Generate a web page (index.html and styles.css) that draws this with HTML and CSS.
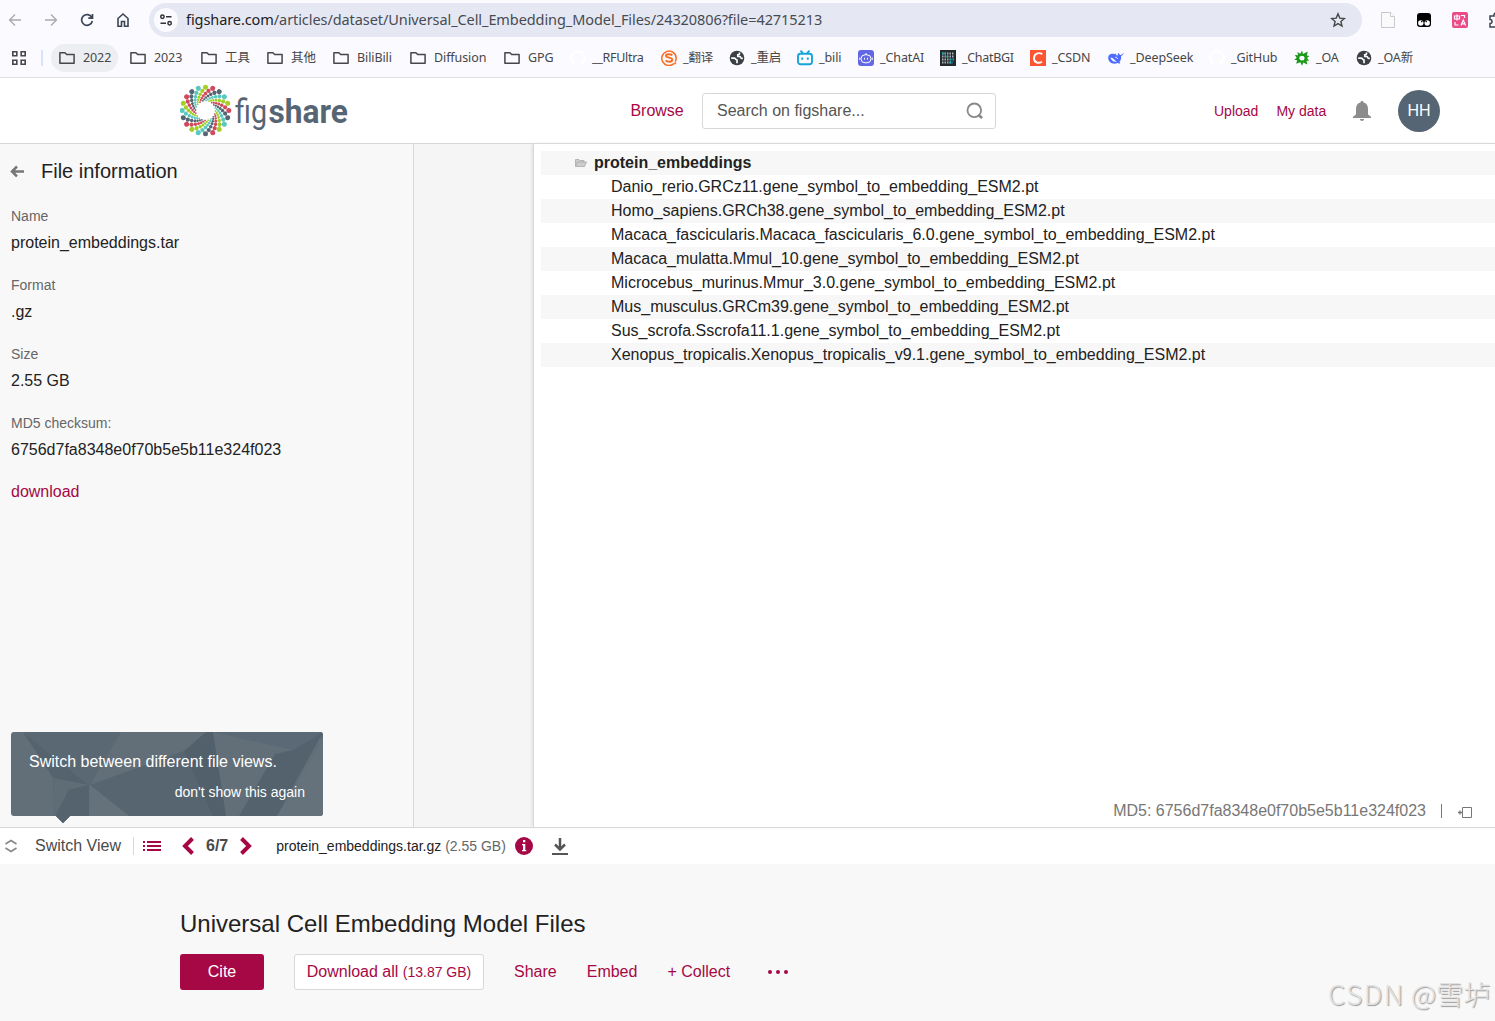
FILE: index.html
```html
<!DOCTYPE html>
<html lang="en">
<head>
<meta charset="utf-8">
<title>Universal Cell Embedding Model Files</title>
<link rel="stylesheet" href="styles.css">
</head>
<body>
<svg class="defs" width="0" height="0">
  <defs>
    <symbol id="folder" viewBox="0 0 16 16"><path d="M.9 2.7h5l1.8 1.9h7.4v8.7H.9z" fill="none" stroke="#474747" stroke-width="1.5" stroke-linejoin="round"/></symbol>
    <symbol id="globe" viewBox="0 0 16 16"><circle cx="8" cy="8" r="7.3" fill="#3c4043"/><path d="M2.200 8.200h3c1.500 0 1.300 1.800 2.800 1.800v3.200" fill="none" stroke="#fafaff" stroke-width="1.700"/><path d="M10.500 2.500v1.300c0 .8-.7 1-1.700 1v1.700h2c.9 0 .8 1.900 2 1.900h1" fill="none" stroke="#fafaff" stroke-width="1.700"/></symbol>
    <symbol id="github" viewBox="0 0 16 16"><path fill="#fff" d="M8 0a8 8 0 0 0-2.500 15.600v-2.200c-2.500.2-2.400-1.800-3.400-2 1.500-.8 1.800 1.400 3.400.6.100-.6.300-.9.600-1.100-3.900-.4-4.600-4.200-2.800-6.200-.3-.8 0-1.700.1-2.100.8-.1 1.600.4 2.200.8 1.300-.400 3.500-.4 4.800 0 .6-.4 1.400-.9 2.200-.8.1.4.400 1.300.1 2.100 1.800 2 1.100 5.800-2.800 6.200.4.300.6.900.6 1.700v3A8 8 0 0 0 8 0z"/></symbol>
    <g id="arm">
      <circle cx="0" cy="-23.300" r="2.500"/><circle cx="-3.200" cy="-19.600" r="2.100"/><circle cx="-5.200" cy="-16.200" r="1.750"/><circle cx="-6.500" cy="-13.300" r="1.450"/><circle cx="-7.300" cy="-10.700" r="1.250"/><circle cx="-7.700" cy="-8.400" r="1.100"/><circle cx="-7.800" cy="-6.300" r=".9"/>
    </g>
    <g id="arms">
      <use href="#arm" fill="#a3cf27"/><use href="#arm" fill="#cf4a5b" transform="rotate(18)"/><use href="#arm" fill="#566573" transform="rotate(36)"/><use href="#arm" fill="#5bc8bf" transform="rotate(54)"/>
    </g>
  </defs>
</svg>

<div class="browser">
  <div class="nav">
    <svg class="nav-icon" viewBox="0 0 16 16"><path d="M14 8H3M8 2.500 2.600 8 8 13.500" fill="none" stroke="#a9aaae" stroke-width="1.400"/></svg>
    <svg class="nav-icon" viewBox="0 0 16 16"><path d="M2 8h11M8 2.500 13.400 8 8 13.500" fill="none" stroke="#a9aaae" stroke-width="1.400"/></svg>
    <svg class="nav-icon" viewBox="0 0 16 16"><path d="M12.800 5.500A5.400 5.400 0 1 0 13.300 9M13.500 2v4.200H9.300" fill="none" stroke="#3c4554" stroke-width="1.700"/></svg>
    <svg class="nav-icon" viewBox="0 0 16 16"><path d="M3 6.500v7.800h3.500V9.500h3v4.800H13V6.500L8 2z" fill="none" stroke="#3c4554" stroke-width="1.600"/></svg>
    <div class="address">
      <span class="site-info"><svg width="14" height="14" viewBox="0 0 14 14" fill="none" stroke="#333" stroke-width="1.500"><circle cx="3.400" cy="3.800" r="1.700"/><path d="M7 3.800h5.500M1.500 10.200H7"/><circle cx="10.600" cy="10.200" r="1.700"/></svg></span>
      <span class="url"><b>figshare.com</b>/articles/dataset/Universal_Cell_Embedding_Model_Files/24320806?file=42715213</span>
      <svg class="star" width="16" height="16" viewBox="0 0 16 16"><path d="m8 1.800 1.800 4.300 4.600.400-3.500 3 1.100 4.600L8 11.600l-4 2.500 1.100-4.600-3.500-3 4.600-.4z" fill="none" stroke="#474747" stroke-width="1.400"/></svg>
    </div>
    <svg class="ext" viewBox="0 0 16 16"><path d="M1.500.5h9l4 4v11h-13z" fill="#fafafa" stroke="#cacaca"/><path d="M10.500.5v4h4" fill="#fff" stroke="#cacaca"/></svg>
    <svg class="ext" viewBox="0 0 16 16"><rect x="1" y="1" width="14" height="14" rx="3"/><circle cx="4.800" cy="11" r="2.700" fill="#fff"/><circle cx="11.200" cy="11" r="2.700" fill="#fff"/><circle cx="5.800" cy="9.600" r=".8"/><circle cx="10.200" cy="9.600" r=".8"/></svg>
    <svg class="ext" viewBox="0 0 16 16"><rect width="16" height="16" rx="2" fill="#ea4c89"/><path d="M2.500 4h5v3h-5zM5 2.500v6M9 3.500h3.500V6M3 10v3h3.500M9 13.500 11.300 8l2.300 5.500M9.800 11.800h3" fill="none" stroke="#fff" stroke-width="1.200"/></svg>
    <svg class="ext" viewBox="0 0 16 16"><path d="M2 4h4V3a2 2 0 0 1 4 0v1h4v11H2v-3.500a2 2 0 0 0 0-4z" fill="none" stroke="#3c4554" stroke-width="1.500"/></svg>
  </div>
  <div class="bookmarks">
    <svg class="apps" viewBox="0 0 16 16" fill="none" stroke="#474747" stroke-width="1.600"><path d="M1.800 1.800h4v4h-4zM10.200 1.800h4v4h-4zM1.800 10.200h4v4h-4zM10.200 10.200h4v4h-4z"/></svg>
    <i class="bar-sep"></i>
    <span class="bm folder active"><svg><use href="#folder"/></svg>2022</span>
    <span class="bm folder"><svg><use href="#folder"/></svg>2023</span>
    <span class="bm folder"><svg><use href="#folder"/></svg>工具</span>
    <span class="bm folder"><svg><use href="#folder"/></svg>其他</span>
    <span class="bm folder"><svg><use href="#folder"/></svg>BiliBili</span>
    <span class="bm folder"><svg><use href="#folder"/></svg>Diffusion</span>
    <span class="bm folder"><svg><use href="#folder"/></svg>GPG</span>
    <span class="bm tight"><svg><use href="#github"/></svg>__RFUltra</span>
    <span class="bm"><svg viewBox="0 0 16 16" fill="none" stroke="#fa6b20"><path d="M13 13.500A7.200 7.200 0 1 1 15.200 8c0 1.500-.4 2.700-1 3.700" stroke-width="1.500"/><path d="M11.300 5.200C9.500 3.700 4.800 3.700 5 6c.200 2.200 6.300 1 6.300 3.700 0 2.600-4.800 2.300-6.800.8" stroke-width="2"/><path d="M13.300 13.300h1.900" stroke-width="1.800"/></svg>_翻译</span>
    <span class="bm"><svg><use href="#globe"/></svg>_重启</span>
    <span class="bm"><svg viewBox="0 0 16 16" fill="none" stroke="#16a5d9" stroke-width="1.900"><rect x="1" y="3.800" width="14" height="10.500" rx="2.500"/><path d="m3.500.6 2.300 2.600M12.500.6l-2.300 2.600M5.200 7.500v2.300M10.800 7.500v2.300"/></svg>_bili</span>
    <span class="bm"><svg viewBox="0 0 16 16" fill="none" stroke="#fff"><rect width="16" height="16" rx="3" fill="#6268e5" stroke="none"/><rect x="3" y="4.800" width="10" height="8" rx="4"/><path d="M8 3v2M1.800 7.500v2.500M14.200 7.500v2.500M6.500 7.800v1.800M9.500 7.800v1.800"/></svg>_ChatAI</span>
    <span class="bm tight"><svg viewBox="0 0 16 16"><rect width="16" height="16" fill="#252a2b"/><path d="M2 3.500h12M2 6.500h12M2 9.500h8M2 12.500h10" stroke="#a5b0b2" stroke-width="2" stroke-dasharray="1.500 1"/><path d="M2 3.500h4M5 6.500h3M10 9.500h4M10 12.500h3" stroke="#20a8bd" stroke-width="2" stroke-dasharray="1.500 1"/></svg>_ChatBGI</span>
    <span class="bm"><svg viewBox="0 0 16 16"><rect width="16" height="16" fill="#fc5531"/><path d="M12.300 4.300C10 2.500 4.500 2.300 4 8c-.2 5.300 5 5.500 8 3.700" fill="none" stroke="#fff" stroke-width="1.900"/></svg>_CSDN</span>
    <span class="bm"><svg viewBox="0 0 16 16"><path d="M15.700 2.700c-.5 1.700-1.300 2.800-2.600 3.200.3 2.500-.3 4.500-1.700 6.100.8.500 1 1 .8 1.300-1 .3-1.900.2-2.700-.3C5 15 .3 12.500.2 7.800.2 4.600 3.700 3 6.300 4.300c.5-.3.8-.8 1.200-.8.300.9.700 1.600 1.600 2.200.6-.2.700-1 .9-2.700 1.100.5 1.700 1.400 2 2.100 1.300 0 2.100-1.100 3.700-2.400z" fill="#4d6bfe"/><path d="M2.500 7.500c2.500-.3 4 3 6.200 4-2.400.9-5.800-.9-6.200-4z" fill="#fafaff"/><path d="M7.300 7.300c1.300-.3 2.200.500 2.200 1.700" fill="none" stroke="#fafaff" stroke-width=".9"/></svg>_DeepSeek</span>
    <span class="bm"><svg><use href="#github"/></svg>_GitHub</span>
    <span class="bm"><svg viewBox="0 0 16 16"><path fill="#1a981a" fill-rule="evenodd" d="M8 .5 9 4l4.800-2.500-1 4 2.700.6-2.500 2 2.200 2.600-2.700.1.800 3.700-4-2L8 15.800l-1.600-3.500-4.200 1.400 1-3.500-2.900-.5 2.400-2L.8 4.900l3.300.3L3.300 2l3 1.800zM7.800 5.800 5.600 6.600 5.300 9l1.900 1.500 2.600-.3.900-2.200-.900-1.800z"/></svg>_OA</span>
    <span class="bm"><svg><use href="#globe"/></svg>_OA新</span>
  </div>
</div>

<header class="site-header">
  <svg class="logo" width="170" height="54" viewBox="0 0 170 54">
    <g transform="translate(25.500 26.500)"><use href="#arms"/><use href="#arms" transform="rotate(72)"/><use href="#arms" transform="rotate(144)"/><use href="#arms" transform="rotate(216)"/><use href="#arms" transform="rotate(288)"/></g>
    <text class="logo-light" x="55" y="39" textLength="32" lengthAdjust="spacingAndGlyphs">fig</text>
    <text class="logo-bold" x="88.500" y="39" textLength="79.500" lengthAdjust="spacingAndGlyphs">share</text>
  </svg>
  <a class="browse">Browse</a>
  <div class="search"><span>Search on figshare...</span><svg width="18" height="18" viewBox="0 0 18 18" fill="none" stroke="#888" stroke-width="1.800"><circle cx="8.300" cy="8.300" r="6.800"/><path d="m12.300 12.800 3.800 3.200" stroke-width="2.600"/></svg></div>
  <nav class="account"><a>Upload</a><a>My data</a></nav>
  <svg class="bell" width="18" height="20" viewBox="0 0 18 20" fill="#8c8c8c"><path d="M9 0c1 0 1.500.7 1.500 1.600C13.700 2.300 15 5 15 8v5.500l3 2.200V17H0v-1.300l3-2.200V8c0-3 1.300-5.700 4.500-6.400C7.500.7 8 0 9 0zM7 18h4c0 1-.8 2-2 2s-2-1-2-2z"/></svg>
  <div class="avatar">HH</div>
</header>

<main class="viewer">
  <aside class="info">
    <h2><svg width="14" height="12" viewBox="0 0 14 12" fill="none" stroke="#777" stroke-width="2.500"><path d="M14 6.500H2.500M7 1.500 2 6.500l5 5"/></svg>File information</h2>
    <dl>
      <dt>Name</dt><dd>protein_embeddings.tar</dd>
      <dt>Format</dt><dd>.gz</dd>
      <dt>Size</dt><dd>2.55 GB</dd>
      <dt>MD5 checksum:</dt><dd>6756d7fa8348e0f70b5e5b11e324f023</dd>
    </dl>
    <a>download</a>
    <div class="tip">
      <svg class="tip-bg" width="312" height="92" viewBox="0 0 312 92">
        <defs><clipPath id="bubble"><path d="M3 0h306a3 3 0 0 1 3 3v78a3 3 0 0 1-3 3H59l-7 7-7-7H3a3 3 0 0 1-3-3V3a3 3 0 0 1 3-3z"/></clipPath></defs>
        <g clip-path="url(#bubble)">
          <path d="M0 0h312v92H0z" fill="#626f79"/>
          <path d="M12 0h98L79 53z" fill="#5a6873"/>
          <path d="M12 0 42 46 44 92h15L78 84V53z" fill="#54636e"/>
          <path d="M42 46 79 53 57 58 49 84h-5z" fill="#5f6d77"/>
          <path d="m79 53 94-34 42 65h-97z" fill="#576570"/>
          <path d="m79 53 39 31H78z" fill="#65717b"/>
          <path d="m173 19 22-19h7l13 84h-13z" fill="#52606b"/>
          <path d="M202 0h110v5l-30 13z" fill="#5a6975"/>
          <path d="m282 18 30-18-46 84h-38l36-62z" fill="#53626d"/>
          <path d="M312 8v76h-46z" fill="#65717b"/>
          <path d="m44 84 14-26 20-5v31L52 92z" fill="#54636e"/>
        </g>
      </svg>
      <p>Switch between different file views.</p>
      <p class="dismiss">don't show this again</p>
    </div>
  </aside>
  <section class="preview">
    <ul class="files">
      <li class="dir"><svg width="12" height="8" viewBox="0 0 12 8"><path d="M.5 7V.5h3.500l1 1h4V3M.5 7.500 2.500 3h9l-2 4.500z" fill="#ccc" stroke="#aaa" stroke-width=".8"/></svg>protein_embeddings</li>
      <li>Danio_rerio.GRCz11.gene_symbol_to_embedding_ESM2.pt</li>
      <li>Homo_sapiens.GRCh38.gene_symbol_to_embedding_ESM2.pt</li>
      <li>Macaca_fascicularis.Macaca_fascicularis_6.0.gene_symbol_to_embedding_ESM2.pt</li>
      <li>Macaca_mulatta.Mmul_10.gene_symbol_to_embedding_ESM2.pt</li>
      <li>Microcebus_murinus.Mmur_3.0.gene_symbol_to_embedding_ESM2.pt</li>
      <li>Mus_musculus.GRCm39.gene_symbol_to_embedding_ESM2.pt</li>
      <li>Sus_scrofa.Sscrofa11.1.gene_symbol_to_embedding_ESM2.pt</li>
      <li>Xenopus_tropicalis.Xenopus_tropicalis_v9.1.gene_symbol_to_embedding_ESM2.pt</li>
    </ul>
    <div class="checksum"><span>MD5: 6756d7fa8348e0f70b5e5b11e324f023</span><i></i><svg width="15" height="12" viewBox="0 0 15 12" fill="none" stroke="#777"><path d="M4.500 1.500h9v10h-9z"/><path d="M0 6.500h4M2 4.500v4" stroke-width="1.300"/></svg></div>
  </section>
</main>

<div class="toolbar">
  <svg class="updown" width="12" height="14" viewBox="0 0 12 14" fill="none" stroke="#888" stroke-width="1.700"><path d="m.5 5 5.500-3.500L11.500 5M.5 9 6 12.500 11.500 9"/></svg>
  <span class="switch">Switch View</span>
  <svg class="list" width="18" height="12" viewBox="0 0 18 12" stroke="#a60845" stroke-width="2"><path d="M0 2h2M4 2h14M0 6h2M4 6h14M0 10h2M4 10h14"/></svg>
  <svg class="prev" width="12" height="18" viewBox="0 0 12 18" fill="none" stroke="#a60845" stroke-width="4"><path d="m10.500 1.500-7.500 7.500 7.500 7.500"/></svg>
  <b class="count">6/7</b>
  <svg class="next" width="12" height="18" viewBox="0 0 12 18" fill="none" stroke="#a60845" stroke-width="4"><path d="M1.500 1.500 9 9l-7.500 7.500"/></svg>
  <span class="filename">protein_embeddings.tar.gz <em>(2.55 GB)</em></span>
  <svg class="i-icon" width="18" height="18" viewBox="0 0 18 18"><circle cx="9" cy="9" r="9" fill="#a60845"/><path d="M8 3h2.300v2.200H8zM7 7h3.300v6h1v1.200H7V13h1V8.200H7z" fill="#fff"/></svg>
  <svg class="save" width="16" height="17" viewBox="0 0 16 17" fill="none" stroke="#555" stroke-width="2"><path d="M8 0v11M3 6.500 8 11.500 13 6.500" stroke-width="2.500"/><path d="M0 16h16"/></svg>
</div>

<section class="article">
  <h1>Universal Cell Embedding Model Files</h1>
  <div class="actions">
    <a class="cite">Cite</a>
    <a class="download">Download all <small>(13.87 GB)</small></a>
    <a class="share">Share</a><a class="embed">Embed</a><a class="collect">+ Collect</a>
    <svg width="22" height="6" viewBox="0 0 22 6" fill="#a60845"><circle cx="3" cy="3" r="2"/><circle cx="11" cy="3" r="2"/><circle cx="19" cy="3" r="2"/></svg>
  </div>
  <div class="watermark"><span>CSDN</span> @雪垆</div>
</section>
</body>
</html>
```
FILE: styles.css
```css
* { box-sizing: border-box; }
body { margin: 0; width: 1495px; height: 1021px; overflow: hidden; background: #f8f8f8; font: 16px/24px "Liberation Sans", Arial, sans-serif; color: #222; }
svg { flex: none; display: block; }
a { color: #a60845; }
h1, h2, p, dl, dd, ul { margin: 0; padding: 0; font-weight: normal; }
.defs { position: absolute; }

.browser { height: 78px; background: #fafaff; border-bottom: 1px solid #dfe1e8; font-family: "Noto Sans", "Noto Sans CJK SC", sans-serif; overflow: hidden; }
.nav { height: 40px; display: flex; align-items: center; padding-left: 7px; }
.nav-icon { width: 16px; height: 16px; margin-right: 20px; }
.address { width: 1213px; height: 34px; margin-left: -2px; border-radius: 17px; background: #e5e8f3; display: flex; align-items: center; flex: none; padding: 0 16px 0 5px; }
.site-info { width: 24px; height: 24px; border-radius: 50%; background: #fafaff; display: flex; align-items: center; justify-content: center; }
.url { margin-left: 8px; padding-bottom: 2px; font-size: 14.5px; letter-spacing: -.08px; color: #474b52; white-space: nowrap; }
.url b { font-weight: normal; color: #202124; }
.star { margin-left: auto; }
.ext { width: 16px; height: 16px; margin-left: 20px; }
.address + .ext { margin-left: 18px; }
.bookmarks { height: 36px; display: grid; align-items: center; font-size: 12.5px; letter-spacing: -.1px; color: #474747; grid-template-columns: 41px 10px 71px 71px 66px 66px 77px 94px 66px 91px 68px 68px 61px 82px 90px 78px 101px 85px 62px 80px; }
.apps { width: 16px; height: 16px; margin-left: 11px; }
.bar-sep { width: 2px; height: 16px; background: #d5e3fc; }
.bm { display: flex; align-items: center; justify-self: start; height: 28px; gap: 6px; padding: 0 8px; white-space: nowrap; }
.bm.folder { gap: 8px; }
.bm.tight { letter-spacing: -.3px; }
.bm svg { width: 16px; height: 16px; }
.active { width: 67px; background: #eceef2; border-radius: 14px; }

.site-header { height: 66px; background: #fff; border-bottom: 1px solid #d8d8d8; display: flex; align-items: center; padding-left: 180px; }
.logo-light, .logo-bold { font-family: Roboto, sans-serif; font-size: 33px; fill: #566573; }
.logo-light { font-weight: 400; }
.logo-bold { font-weight: 700; }
.browse { margin-left: 280px; width: 72px; padding-left: .4px; }
.search { width: 294px; height: 36px; border: 1px solid #d8d8d8; border-radius: 3px; display: flex; align-items: center; justify-content: space-between; padding: 0 11px 0 14px; color: #555; }
.account { display: flex; gap: 18px; margin-left: 218px; width: 139px; font-size: 14px; }
.bell { margin-right: 27px; }
.avatar { width: 42px; height: 42px; border-radius: 50%; background: #566573; color: #fff; display: flex; align-items: center; justify-content: center; }

.viewer { height: 684px; display: flex; border-bottom: 1px solid #d8d8d8; background: #f5f5f5; }
.info { width: 414px; border-right: 1px solid #d8d8d8; background: #f8f8f8; padding: 15px 10px 0 11px; position: relative; }
.info h2 { font-size: 20px; display: flex; align-items: center; gap: 17px; margin: 0 0 22px -1px; }
.info dt { font-size: 14px; line-height: 22px; color: #666; }
.info dd { line-height: 30px; padding-top: 1px; margin-bottom: 16px; }
.info > a { display: block; margin-top: -1px; }
.tip { position: absolute; left: 11px; top: 588px; width: 312px; height: 84px; padding: 18px 18px; color: #fff; }
.tip-bg { position: absolute; left: 0; top: 0; }
.tip p { position: relative; }
.tip .dismiss { font-size: 14px; text-align: right; margin-top: 6px; }
.preview { margin-left: 119px; flex: 1; background: #fff; border-left: 1px solid #d8d8d8; box-shadow: -1px 0 3px #ddd; padding: 7px 0 0 7px; display: flex; flex-direction: column; }
.files { list-style: none; }
.files li { height: 24px; padding-left: 70px; }
.files li:nth-child(odd) { background: #f7f7f7; }
.files .dir { display: flex; align-items: center; gap: 7px; padding-left: 34px; font-weight: bold; }
.checksum { margin-top: auto; display: flex; align-items: center; align-self: flex-end; color: #777; margin-right: 22px; padding-bottom: 4px; }
.checksum i { width: 1px; height: 14px; background: #777; margin: 0 16px 0 15px; }
.checksum svg { margin-top: 2px; }

.toolbar { height: 36px; background: #fff; display: flex; align-items: center; padding-left: 5px; color: #4a4a4a; }
.switch { margin-left: 18px; width: 99px; border-right: 1px solid #d8d8d8; line-height: 18px; }
.list { margin-left: 9px; }
.prev { margin-left: 21px; }
.count { margin: 0 12px; }
.filename { margin-left: 24px; font-size: 14px; color: #222; white-space: nowrap; }
.filename em { font-style: normal; color: #666; }
.i-icon { margin-left: 9px; }
.save { margin-left: 19px; margin-top: 1px; }

.article { height: 157px; padding: 42px 0 0 180px; position: relative; }
h1 { font-size: 24px; line-height: 36px; }
.actions { display: flex; align-items: center; margin-top: 12px; }
.cite { width: 84px; height: 36px; background: #a60845; color: #fff; border-radius: 3px; text-align: center; line-height: 36px; }
.download { width: 190px; height: 36px; margin-left: 30px; border: 1px solid #d8d8d8; border-radius: 3px; background: #fff; text-align: center; line-height: 34px; }
.download small { font-size: 14px; }
.share, .embed, .collect { margin-left: 30px; }
.actions svg { margin-left: 37px; }
.watermark { position: absolute; right: 4px; bottom: 11px; font: 300 27.5px/34px "Noto Sans CJK SC", sans-serif; color: #e2e2e2; text-shadow: 1px 1px 1px #999; white-space: nowrap; }
.watermark span { letter-spacing: 1.6px; }
```
